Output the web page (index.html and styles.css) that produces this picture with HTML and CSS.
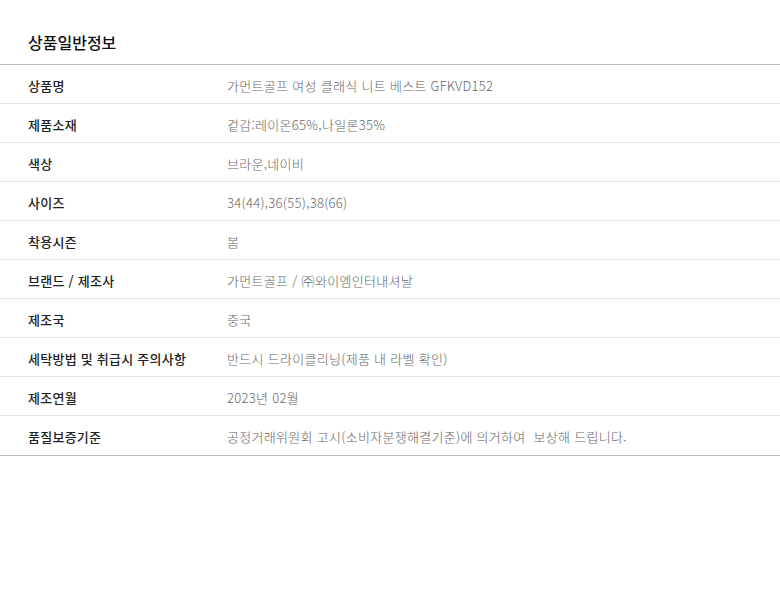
FILE: index.html
```html
<!DOCTYPE html>
<html lang="ko">
<head>
<meta charset="utf-8">
<link rel="stylesheet" href="styles.css">
</head>
<body>
<section class="info">
  <h2 class="info-title">상품일반정보</h2>
  <div class="info-table">
    <div class="row"><div class="label">상품명</div><div class="value">가먼트골프 여성 클래식 니트 베스트 GFKVD152</div></div>
    <div class="row"><div class="label">제품소재</div><div class="value">겉감:레이온65%,나일론35%</div></div>
    <div class="row"><div class="label">색상</div><div class="value">브라운,네이비</div></div>
    <div class="row"><div class="label">사이즈</div><div class="value">34(44),36(55),38(66)</div></div>
    <div class="row"><div class="label">착용시즌</div><div class="value">봄</div></div>
    <div class="row"><div class="label">브랜드 / 제조사</div><div class="value">가먼트골프 / ㈜와이엠인터내셔날</div></div>
    <div class="row"><div class="label">제조국</div><div class="value">중국</div></div>
    <div class="row"><div class="label">세탁방법 및 취급시 주의사항</div><div class="value">반드시 드라이클리닝(제품 내 라벨 확인)</div></div>
    <div class="row"><div class="label">제조연월</div><div class="value">2023년 02월</div></div>
    <div class="row"><div class="label">품질보증기준</div><div class="value">공정거래위원회 고시(소비자분쟁해결기준)에 의거하여&nbsp; 보상해 드립니다.</div></div>
  </div>
</section>
</body>
</html>
```
FILE: styles.css
```css
html, body {
  margin: 0;
  padding: 0;
  background: #fff;
}
body {
  font-family: "Noto Sans CJK KR", "Noto Sans", sans-serif;
  color: #222;
}
.info {
  padding-top: 30px;
}
.info-title {
  margin: 0;
  padding: 0 28px;
  font-size: 16px;
  font-weight: 500;
  line-height: 24px;
  height: 34px;
  color: #111;
}
.info-table {
  border-top: 1px solid #bdbdbd;
  border-bottom: 1px solid #bdbdbd;
}
.row {
  display: flex;
  align-items: center;
  height: 38px;
  font-size: 13px;
  line-height: 20px;
}
.row + .row {
  border-top: 1px solid #e3e3e3;
}
.row:last-child {
  height: 39px;
}
.label,
.value {
  padding-top: 3px;
}
.label {
  width: 199px;
  padding-left: 28px;
  font-weight: 500;
  color: #222;
  letter-spacing: 0.25px;
}
.value {
  font-weight: 300;
  color: #666;
  letter-spacing: 0.3px;
}
```
